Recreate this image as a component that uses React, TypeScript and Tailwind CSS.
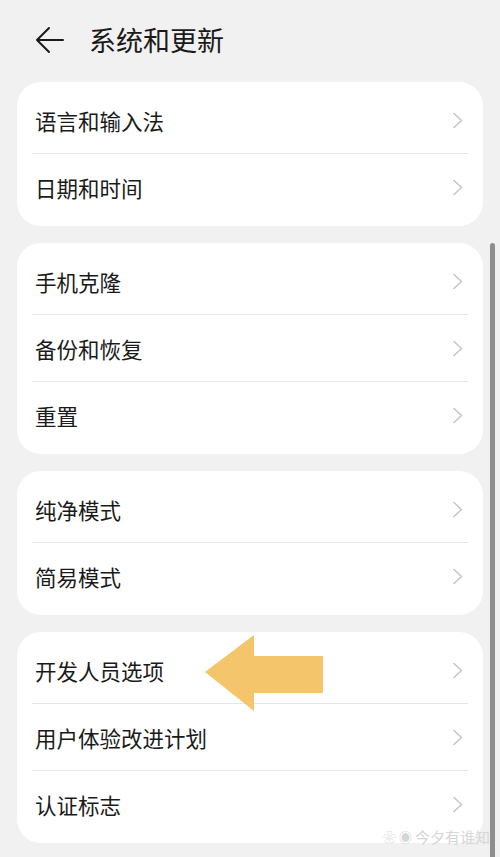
import React from 'react';

const GROUPS: string[][] = [
  ['语言和输入法', '日期和时间'],
  ['手机克隆', '备份和恢复', '重置'],
  ['纯净模式', '简易模式'],
  ['开发人员选项', '用户体验改进计划', '认证标志'],
];

function Chevron() {
  return (
    <svg width="12" height="17" viewBox="0 0 12 17" fill="none">
      <path d="M2 1.5 L9.5 8.5 L2 15.5" stroke="#c6c6c6" strokeWidth="1.6" strokeLinecap="round" strokeLinejoin="round" />
    </svg>
  );
}

function Row({ label, last }: { label: string; last: boolean }) {
  return (
    <div className="relative flex h-[67px] items-center justify-between pl-[18px] pr-[19px]">
      <span className="text-[21.5px] leading-none text-[#1a1a1a]">{label}</span>
      <Chevron />
      {!last && <div className="absolute bottom-0 left-[15px] right-[15px] h-px bg-[#e6e6e6]" />}
    </div>
  );
}

export default function App() {
  return (
    <div
      className="relative h-[857px] w-[500px] overflow-hidden bg-[#f1f1f1]"
      style={{ fontFamily: '"Noto Sans CJK SC", "Noto Sans", sans-serif' }}
    >
      {/* 헤더 */}
      <div className="flex h-[82px] items-start pt-[23px]">
        <div className="ml-[34px] flex h-[34px] w-[32px] items-center">
          <svg width="30" height="28" viewBox="0 0 30 28" fill="none">
            <path d="M29 14 H3 M15 2 L3 14 L15 26" stroke="#1a1a1a" strokeWidth="2" strokeLinecap="round" strokeLinejoin="round" />
          </svg>
        </div>
        <h1 className="ml-[23px] text-[27px] leading-[34px] text-[#1a1a1a]">系统和更新</h1>
      </div>

      {/* 목록 */}
      <div className="flex flex-col gap-[17px] px-[17px]">
        {GROUPS.map((items, gi) => (
          <div key={gi} className="rounded-[24px] bg-white py-[5px]">
            {items.map((label, i) => (
              <Row key={label} label={label} last={i === items.length - 1} />
            ))}
          </div>
        ))}
      </div>

      {/* 스크롤바 */}
      <div className="absolute right-[5px] top-[243px] bottom-0 w-[5px] rounded-t-full bg-[#8e8e8e]" />

      {/* 노란 화살표 */}
      <svg className="absolute left-[203px] top-[633px]" width="124" height="80" viewBox="0 0 124 80">
        <path d="M2 39 L51 2 L51 23 L120 23 L120 60 L51 60 L51 78 Z" fill="#f4c56a" />
      </svg>

      {/* 워터마크 */}
      <div className="absolute bottom-[13px] right-[10px] flex items-center gap-[3px] text-[15px] leading-none text-[#d6d6d6]">
        <span className="text-[13px]">❀</span>
        <span className="text-[13px]">◉</span>
        <span>今夕有谁知</span>
      </div>
    </div>
  );
}
